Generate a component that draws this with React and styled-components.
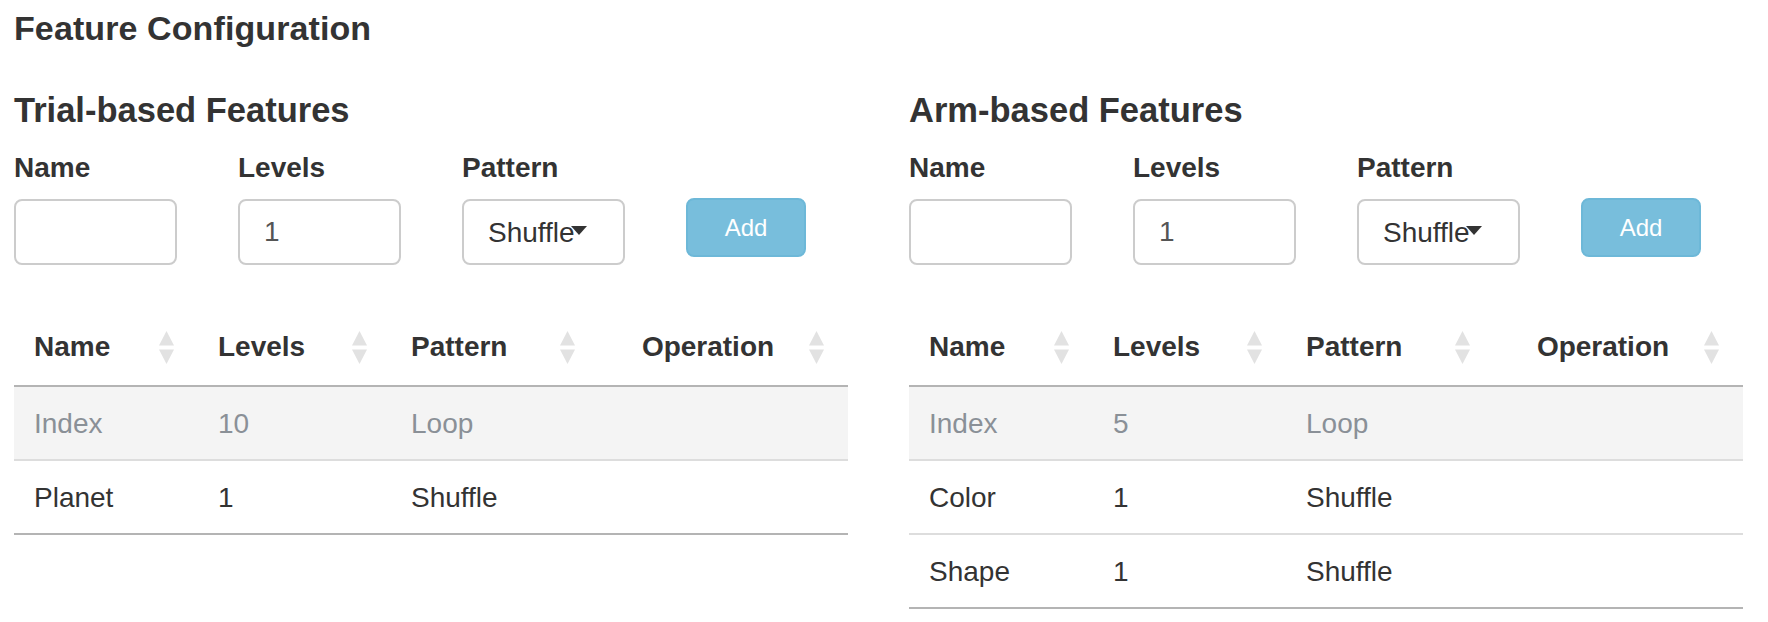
import React from "react";
import styled, { createGlobalStyle } from "styled-components";

const GlobalStyle = createGlobalStyle`
  body {
    margin: 0;
    background: #fff;
    font-family: "Liberation Sans", Arial, Helvetica, sans-serif;
    color: #333;
  }
`;

const Page = styled.div`
  padding: 8px 0 0 14px;
`;

const Title = styled.h1`
  margin: 0;
  font-size: 34px;
  line-height: 40px;
  font-weight: 700;
  color: #333;
  letter-spacing: 0.1px;
`;

const Columns = styled.div`
  display: grid;
  grid-template-columns: 834px 834px;
  column-gap: 61px;
  margin-top: 42px;
`;

const SectionTitle = styled.h2`
  margin: 0 0 18px;
  font-size: 34.5px;
  line-height: 40px;
  font-weight: 700;
  color: #333;
`;

const FormRow = styled.div`
  display: grid;
  grid-template-columns: 163px 163px 163px 120px;
  column-gap: 61px;
  align-items: start;
`;

const Field = styled.div`
  display: flex;
  flex-direction: column;
  gap: 11px;
`;

const Label = styled.label`
  font-size: 28px;
  line-height: 40px;
  font-weight: 700;
  color: #333;
`;

const Input = styled.input`
  box-sizing: border-box;
  width: 163px;
  height: 66px;
  padding: 0 24px;
  border: 2px solid #cccccc;
  border-radius: 8px;
  background: #fff;
  font-family: inherit;
  font-size: 28px;
  color: #555;
  outline: none;
`;

const SelectWrap = styled.div`
  position: relative;
  width: 163px;
  height: 66px;
`;

const Select = styled.select`
  box-sizing: border-box;
  width: 100%;
  height: 100%;
  padding: 0 0 0 24px;
  border: 2px solid #cccccc;
  border-radius: 8px;
  background: #fff;
  font-family: inherit;
  font-size: 28px;
  color: #333;
  appearance: none;
  -webkit-appearance: none;
  outline: none;
`;

const Caret = styled.span`
  position: absolute;
  left: 109px;
  top: 27px;
  width: 0;
  height: 0;
  border-left: 8px solid transparent;
  border-right: 8px solid transparent;
  border-top: 9px solid #333;
  pointer-events: none;
`;

const AddButton = styled.button`
  box-sizing: border-box;
  margin-top: 50px;
  width: 120px;
  height: 59px;
  border: 2px solid #6db8d8;
  border-radius: 8px;
  background: #78bedc;
  color: #fff;
  font-family: inherit;
  font-size: 24px;
  cursor: pointer;
`;

const Table = styled.table`
  margin-top: 48px;
  width: 834px;
  table-layout: fixed;
  border-collapse: collapse;
  font-size: 28px;
  line-height: 40px;
`;

const Th = styled.th`
  padding: 14px 24px 18px 20px;
  border-bottom: 2px solid #b4b4b4;
  text-align: left;
  font-weight: 700;
  color: #333;
`;

const ThInner = styled.div`
  display: flex;
  align-items: center;
`;

const ThText = styled.span`
  flex: 1;
  text-align: ${(p) => (p.$center ? "center" : "left")};
  padding-right: ${(p) => (p.$center ? "12px" : "0")};
`;

const SortIcon = styled.svg`
  flex: none;
`;

const Tr = styled.tr`
  background: ${(p) => (p.$muted ? "#f4f4f4" : "#fff")};
  color: ${(p) => (p.$muted ? "#8a9097" : "#333")};

  & > td {
    border-bottom: 2px solid #dddddd;
  }

  &:last-child > td {
    border-bottom-color: #b4b4b4;
  }
`;

const Td = styled.td`
  padding: 17px 20px 15px;
  white-space: nowrap;
`;

function Sort() {
  return (
    <SortIcon width="15" height="33" viewBox="0 0 15 33">
      <path d="M7.5 0 L15 14.5 L0 14.5 Z" fill="#e2e2e2" />
      <path d="M0 18.5 L15 18.5 L7.5 33 Z" fill="#e2e2e2" />
    </SortIcon>
  );
}

const headers = [
  { label: "Name" },
  { label: "Levels" },
  { label: "Pattern" },
  { label: "Operation", center: true },
];

function FeaturePanel({ title, rows }) {
  return (
    <div>
      <SectionTitle>{title}</SectionTitle>
      <FormRow>
        <Field>
          <Label>Name</Label>
          <Input type="text" defaultValue="" />
        </Field>
        <Field>
          <Label>Levels</Label>
          <Input type="text" defaultValue="1" />
        </Field>
        <Field>
          <Label>Pattern</Label>
          <SelectWrap>
            <Select defaultValue="Shuffle">
              <option>Shuffle</option>
              <option>Loop</option>
            </Select>
            <Caret />
          </SelectWrap>
        </Field>
        <AddButton>Add</AddButton>
      </FormRow>

      <Table>
        <colgroup>
          <col style={{ width: 184 }} />
          <col style={{ width: 193 }} />
          <col style={{ width: 208 }} />
          <col style={{ width: 249 }} />
        </colgroup>
        <thead>
          <tr>
            {headers.map((h) => (
              <Th key={h.label}>
                <ThInner>
                  <ThText $center={h.center}>{h.label}</ThText>
                  <Sort />
                </ThInner>
              </Th>
            ))}
          </tr>
        </thead>
        <tbody>
          {rows.map((r) => (
            <Tr key={r.name} $muted={r.muted}>
              <Td>{r.name}</Td>
              <Td>{r.levels}</Td>
              <Td>{r.pattern}</Td>
              <Td />
            </Tr>
          ))}
        </tbody>
      </Table>
    </div>
  );
}

const trialRows = [
  { name: "Index", levels: "10", pattern: "Loop", muted: true },
  { name: "Planet", levels: "1", pattern: "Shuffle" },
];

const armRows = [
  { name: "Index", levels: "5", pattern: "Loop", muted: true },
  { name: "Color", levels: "1", pattern: "Shuffle" },
  { name: "Shape", levels: "1", pattern: "Shuffle" },
];

export default function App() {
  return (
    <Page>
      <GlobalStyle />
      <Title>Feature Configuration</Title>
      <Columns>
        <FeaturePanel title="Trial-based Features" rows={trialRows} />
        <FeaturePanel title="Arm-based Features" rows={armRows} />
      </Columns>
    </Page>
  );
}
